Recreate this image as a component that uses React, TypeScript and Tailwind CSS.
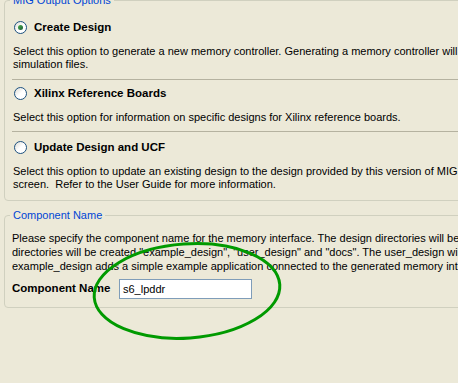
import React from 'react';

const font = { fontFamily: '"Liberation Sans", Arial, sans-serif' };

function Radio({ checked }: { checked?: boolean }) {
  return (
    <span className="flex h-[13px] w-[13px] shrink-0 items-center justify-center rounded-full border border-[#1c5180] bg-gradient-to-br from-[#dcdbd3] via-white to-white">
      {checked && <span className="h-[5px] w-[5px] rounded-full bg-gradient-to-br from-[#4cb34a] to-[#1a5a36]" />}
    </span>
  );
}

function Option({
  label,
  lines,
  checked,
}: {
  label: string;
  lines: string[];
  checked?: boolean;
}) {
  return (
    <div>
      <div className="flex h-[16px] items-center gap-[7px] pl-[9px]">
        <Radio checked={checked} />
        <span className="text-[11.5px] font-bold leading-[16px]">{label}</span>
      </div>
      <div className="mt-[10px] pl-[8px] text-[11px] leading-[13px]">
        {lines.map((l) => (
          <div key={l} className="whitespace-pre">
            {l}
          </div>
        ))}
      </div>
    </div>
  );
}

function GroupBox({ title, children, className }: { title: string; children: React.ReactNode; className?: string }) {
  return (
    <fieldset className={`ml-[4px] w-[700px] rounded-[4px] border border-[#d0d0bf] ${className ?? ''}`}>
      <legend className="ml-[5px] px-[3px] text-[11px] leading-[13px] text-[#0046d5]">{title}</legend>
      {children}
    </fieldset>
  );
}

export default function App() {
  return (
    <div className="relative h-[383px] w-[458px] overflow-hidden bg-[#ece9d8] text-black" style={font}>
      <GroupBox title="MIG Output Options" className="mt-[-6px] h-[207px]">
        <div className="pt-[12px]">
          <Option
            checked
            label="Create Design"
            lines={[
              'Select this option to generate a new memory controller. Generating a memory controller will create the design files and',
              'simulation files.',
            ]}
          />
          <div className="ml-[7px] mt-[8px] h-px bg-[#b5b2a0]" />
          <div className="pt-[5px]">
            <Option
              label="Xilinx Reference Boards"
              lines={['Select this option for information on specific designs for Xilinx reference boards.']}
            />
          </div>
          <div className="ml-[7px] mt-[7px] h-px bg-[#b5b2a0]" />
          <div className="pt-[7px]">
            <Option
              label="Update Design and UCF"
              lines={[
                'Select this option to update an existing design to the design provided by this version of MIG.',
                'screen.  Refer to the User Guide for more information.',
              ]}
            />
          </div>
        </div>
      </GroupBox>

      <GroupBox title="Component Name" className="mt-[8px] h-[99px]">
        <div className="pl-[7px] pt-[9px] text-[11px] leading-[14px]">
          <div className="whitespace-pre">
            Please specify the component name for the memory interface. The design directories will be generated
          </div>
          <div className="whitespace-pre">
            directories will be created "example_design", "user_design" and "docs". The user_design will contain
          </div>
          <div className="whitespace-pre">
            example_design adds a simple example application connected to the generated memory interface.
          </div>
        </div>
        <div className="mt-[6px] flex items-center pl-[7px]">
          <span className="w-[107px] text-[11.5px] font-bold">Component Name</span>
          <div className="flex h-[20px] w-[133px] items-center border border-[#7f9db9] bg-white pl-[3px] text-[11px]">
            s6_lpddr
          </div>
        </div>
      </GroupBox>

      <svg className="pointer-events-none absolute left-0 top-0" width="458" height="383">
        <ellipse
          cx="187"
          cy="291"
          rx="93"
          ry="47"
          transform="rotate(-4 187 291)"
          fill="none"
          stroke="#009a00"
          strokeWidth="3"
        />
      </svg>
    </div>
  );
}
